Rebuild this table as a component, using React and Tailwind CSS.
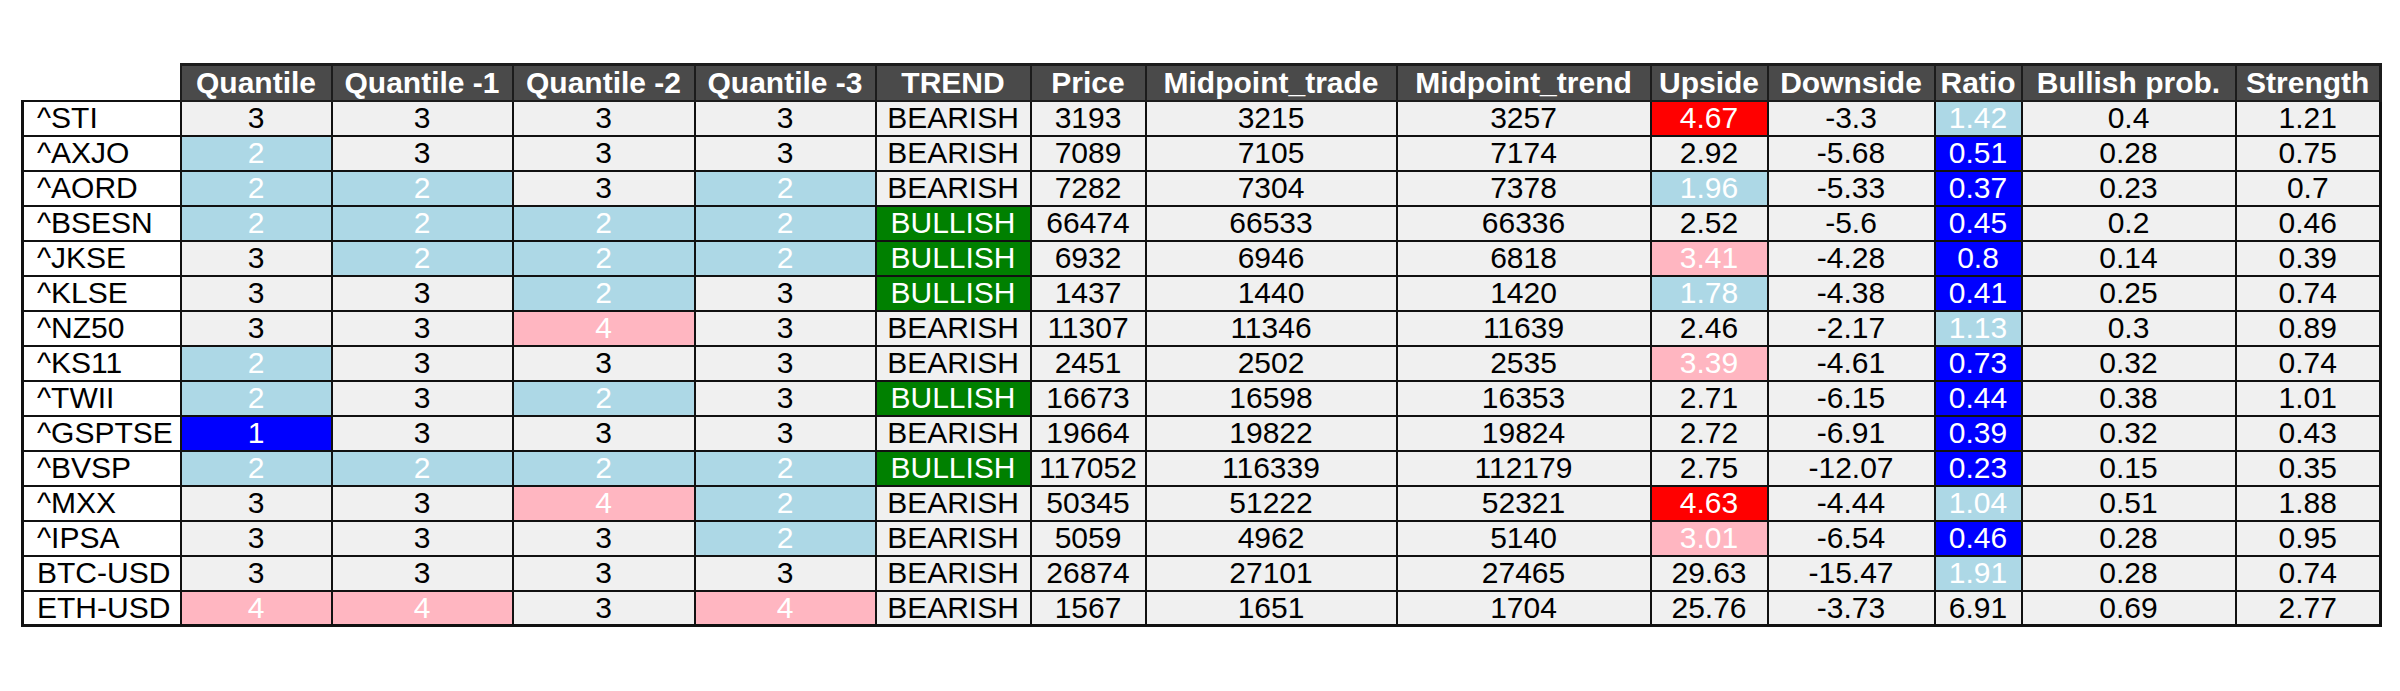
import React from "react";

// column widths measured off the reference, px
const COLUMNS = [
	{ key: "name", label: "", width: 158 },
	{ key: "q0", label: "Quantile", width: 151 },
	{ key: "q1", label: "Quantile -1", width: 181 },
	{ key: "q2", label: "Quantile -2", width: 182 },
	{ key: "q3", label: "Quantile -3", width: 181 },
	{ key: "trend", label: "TREND", width: 155 },
	{ key: "price", label: "Price", width: 115 },
	{ key: "midTrade", label: "Midpoint_trade", width: 251 },
	{ key: "midTrend", label: "Midpoint_trend", width: 254 },
	{ key: "upside", label: "Upside", width: 117 },
	{ key: "downside", label: "Downside", width: 167 },
	{ key: "ratio", label: "Ratio", width: 87 },
	{ key: "bullProb", label: "Bullish prob.", width: 214 },
	{ key: "strength", label: "Strength", width: 145 },
];

const FILLS = {
	b: "bg-[#0000ff] text-white",
	lb: "bg-[#add8e6] text-white",
	p: "bg-[#ffb6c1] text-white",
	r: "bg-[#ff0000] text-white",
	g: "bg-[#008000] text-white",
};

const QUANTILE_FILL = { 1: "b", 2: "lb", 3: null, 4: "p", 5: "r" };

// name, q0..q3, trend, price, midTrade, midTrend, upside, downside, ratio, bullProb, strength, upsideFill, ratioFill
const ROWS = [
	["^STI", 3, 3, 3, 3, "BEARISH", 3193, 3215, 3257, 4.67, -3.3, 1.42, 0.4, 1.21, "r", "lb"],
	["^AXJO", 2, 3, 3, 3, "BEARISH", 7089, 7105, 7174, 2.92, -5.68, 0.51, 0.28, 0.75, null, "b"],
	["^AORD", 2, 2, 3, 2, "BEARISH", 7282, 7304, 7378, 1.96, -5.33, 0.37, 0.23, 0.7, "lb", "b"],
	["^BSESN", 2, 2, 2, 2, "BULLISH", 66474, 66533, 66336, 2.52, -5.6, 0.45, 0.2, 0.46, null, "b"],
	["^JKSE", 3, 2, 2, 2, "BULLISH", 6932, 6946, 6818, 3.41, -4.28, 0.8, 0.14, 0.39, "p", "b"],
	["^KLSE", 3, 3, 2, 3, "BULLISH", 1437, 1440, 1420, 1.78, -4.38, 0.41, 0.25, 0.74, "lb", "b"],
	["^NZ50", 3, 3, 4, 3, "BEARISH", 11307, 11346, 11639, 2.46, -2.17, 1.13, 0.3, 0.89, null, "lb"],
	["^KS11", 2, 3, 3, 3, "BEARISH", 2451, 2502, 2535, 3.39, -4.61, 0.73, 0.32, 0.74, "p", "b"],
	["^TWII", 2, 3, 2, 3, "BULLISH", 16673, 16598, 16353, 2.71, -6.15, 0.44, 0.38, 1.01, null, "b"],
	["^GSPTSE", 1, 3, 3, 3, "BEARISH", 19664, 19822, 19824, 2.72, -6.91, 0.39, 0.32, 0.43, null, "b"],
	["^BVSP", 2, 2, 2, 2, "BULLISH", 117052, 116339, 112179, 2.75, -12.07, 0.23, 0.15, 0.35, null, "b"],
	["^MXX", 3, 3, 4, 2, "BEARISH", 50345, 51222, 52321, 4.63, -4.44, 1.04, 0.51, 1.88, "r", "lb"],
	["^IPSA", 3, 3, 3, 2, "BEARISH", 5059, 4962, 5140, 3.01, -6.54, 0.46, 0.28, 0.95, "p", "b"],
	["BTC-USD", 3, 3, 3, 3, "BEARISH", 26874, 27101, 27465, 29.63, -15.47, 1.91, 0.28, 0.74, null, "lb"],
	["ETH-USD", 4, 4, 3, 4, "BEARISH", 1567, 1651, 1704, 25.76, -3.73, 6.91, 0.69, 2.77, null, null],
];

function fillFor(colIndex, row) {
	if (colIndex >= 1 && colIndex <= 4) return QUANTILE_FILL[row[colIndex]];
	if (colIndex === 5) return row[5] === "BULLISH" ? "g" : null;
	if (colIndex === 9) return row[14];
	if (colIndex === 11) return row[15];
	return null;
}

export default function App() {
	const lastCol = COLUMNS.length - 1;
	const lastRow = ROWS.length - 1;

	return (
		<div
			className="w-[2400px] h-[691px] bg-white pt-[63px] pl-[21px]"
			style={{ fontFamily: '"Liberation Sans", Arial, sans-serif' }}
		>
			<table className="border-collapse table-fixed w-[2358px]">
				<colgroup>
					{COLUMNS.map((c) => (
						<col key={c.key} style={{ width: c.width }} />
					))}
				</colgroup>
				<thead>
					<tr>
						{COLUMNS.map((c, i) =>
							i === 0 ? (
								<th key={c.key} className="bg-white p-0" />
							) : (
								<th
									key={c.key}
									className={`h-[36px] p-0 bg-[#4a4a4a] text-white font-bold text-[30px] leading-none text-center whitespace-nowrap overflow-hidden border-[2px] border-[#1c1c1c] border-t-[3px] ${
										i === lastCol ? "border-r-[3px]" : ""
									}`}
								>
									{c.label}
								</th>
							)
						)}
					</tr>
				</thead>
				<tbody>
					{ROWS.map((row, r) => (
						<tr key={row[0]}>
							{COLUMNS.map((c, i) => {
								const fill = fillFor(i, row);
								const edge = `${i === 0 ? "border-l-[3px]" : ""} ${
									i === lastCol ? "border-r-[3px]" : ""
								} ${r === lastRow ? "border-b-[3px]" : ""}`;
								if (i === 0) {
									return (
										<td
											key={c.key}
											className={`h-[35px] p-0 pl-[13px] bg-white text-black text-[30px] leading-none text-left whitespace-nowrap overflow-hidden border-[2px] border-[#111] ${edge}`}
										>
											{row[0]}
										</td>
									);
								}
								return (
									<td
										key={c.key}
										className={`h-[35px] p-0 text-[30px] leading-none text-center whitespace-nowrap overflow-hidden border-[2px] border-[#111] ${edge} ${
											fill ? FILLS[fill] : "bg-[#f0f0f0] text-black"
										}`}
									>
										{row[i]}
									</td>
								);
							})}
						</tr>
					))}
				</tbody>
			</table>
		</div>
	);
}
